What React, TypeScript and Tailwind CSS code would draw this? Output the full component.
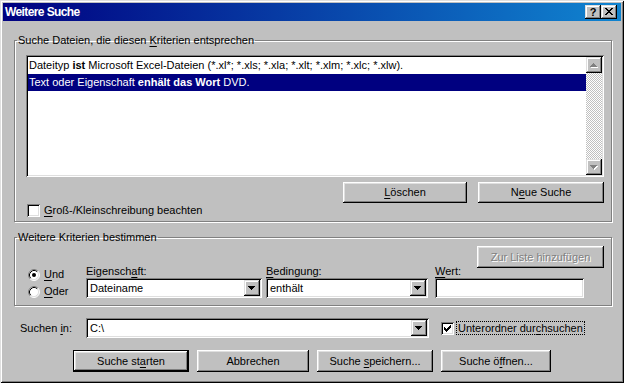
import type { ReactNode } from "react";

const raised =
  "shadow-[inset_-1px_-1px_#000,inset_1px_1px_#fff,inset_-2px_-2px_#808080,inset_2px_2px_#dfdfdf]";
const raisedSmall =
  "shadow-[inset_-1px_-1px_#000,inset_1px_1px_#dfdfdf,inset_-2px_-2px_#808080,inset_2px_2px_#fff]";
const sunken =
  "shadow-[inset_1px_1px_#808080,inset_-1px_-1px_#fff,inset_2px_2px_#000,inset_-2px_-2px_#dfdfdf]";
const etched =
  "border border-[#808080] shadow-[1px_1px_0_#fff,inset_1px_1px_0_#fff]";

function Btn({
  children,
  className = "",
  isDefault = false,
  disabled = false,
}: {
  children: ReactNode;
  className?: string;
  isDefault?: boolean;
  disabled?: boolean;
}) {
  const label = (
    <span
      className={
        disabled
          ? "text-[#808080] [text-shadow:1px_1px_0_#fff]"
          : "text-black"
      }
    >
      {children}
    </span>
  );
  if (isDefault) {
    return (
      <div className={`border border-black ${className}`}>
        <div
          className={`flex h-full w-full items-center justify-center bg-[#c0c0c0] ${raised}`}
        >
          {label}
        </div>
      </div>
    );
  }
  return (
    <div
      className={`flex items-center justify-center bg-[#c0c0c0] ${raised} ${className}`}
    >
      {label}
    </div>
  );
}

function DownArrow() {
  return (
    <svg width="16" height="16" viewBox="0 0 16 16" shapeRendering="crispEdges">
      <rect x="4" y="6" width="7" height="1" fill="#000" />
      <rect x="5" y="7" width="5" height="1" fill="#000" />
      <rect x="6" y="8" width="3" height="1" fill="#000" />
      <rect x="7" y="9" width="1" height="1" fill="#000" />
    </svg>
  );
}

function ScrollArrow({ up }: { up: boolean }) {
  const rows = up
    ? [
        [7, 6, 1],
        [6, 7, 3],
        [5, 8, 5],
        [4, 9, 7],
      ]
    : [
        [4, 6, 7],
        [5, 7, 5],
        [6, 8, 3],
        [7, 9, 1],
      ];
  return (
    <div className={`h-[16px] w-[16px] bg-[#c0c0c0] ${raisedSmall}`}>
      <svg width="16" height="16" viewBox="0 0 16 16" shapeRendering="crispEdges">
        {rows.map(([x, y, w]) => (
          <rect key={`s${y}`} x={x + 1} y={y + 1} width={w} height="1" fill="#fff" />
        ))}
        {rows.map(([x, y, w]) => (
          <rect key={`g${y}`} x={x} y={y} width={w} height="1" fill="#808080" />
        ))}
      </svg>
    </div>
  );
}

function Combo({ value, className = "" }: { value: string; className?: string }) {
  return (
    <div className={`flex h-[20px] bg-white p-[2px] ${sunken} ${className}`}>
      <div className="flex-1 pl-[2px] leading-[16px]">{value}</div>
      <div className={`h-[16px] w-[16px] bg-[#c0c0c0] ${raisedSmall}`}>
        <DownArrow />
      </div>
    </div>
  );
}

function CheckBox({ checked }: { checked: boolean }) {
  return (
    <div className={`h-[13px] w-[13px] shrink-0 bg-white ${sunken}`}>
      {checked && (
        <svg width="13" height="13" viewBox="0 0 13 13" shapeRendering="crispEdges">
          <g fill="#000" transform="translate(3 3)">
            <rect x="6" y="0" width="1" height="1" />
            <rect x="5" y="1" width="2" height="1" />
            <rect x="0" y="2" width="1" height="1" />
            <rect x="4" y="2" width="3" height="1" />
            <rect x="0" y="3" width="2" height="1" />
            <rect x="3" y="3" width="3" height="1" />
            <rect x="0" y="4" width="5" height="1" />
            <rect x="1" y="5" width="3" height="1" />
            <rect x="2" y="6" width="1" height="1" />
          </g>
        </svg>
      )}
    </div>
  );
}

function Radio({ checked }: { checked: boolean }) {
  return (
    <svg width="12" height="12" viewBox="0 0 12 12" className="shrink-0">
      <circle cx="6" cy="6" r="5" fill="#fff" />
      <path d="M2.11 9.89 A5.5 5.5 0 0 1 9.89 2.11" stroke="#808080" fill="none" />
      <path d="M9.89 2.11 A5.5 5.5 0 0 1 2.11 9.89" stroke="#fff" fill="none" />
      <path d="M2.82 9.18 A4.5 4.5 0 0 1 9.18 2.82" stroke="#000" fill="none" />
      <path d="M9.18 2.82 A4.5 4.5 0 0 1 2.82 9.18" stroke="#dfdfdf" fill="none" />
      {checked && <circle cx="6" cy="6" r="2" fill="#000" />}
    </svg>
  );
}

function U({ children }: { children: ReactNode }) {
  return <span className="underline underline-offset-[2px]">{children}</span>;
}

function TitleBar() {
  return (
    <div className="flex h-[18px] items-center bg-[linear-gradient(90deg,#000080,#1084d0)] pl-[2px] pr-[4px]">
      <span className="flex-1 text-[12px] font-bold tracking-[-0.6px] text-white">
        Weitere Suche
      </span>
      <div
        className={`flex h-[14px] w-[16px] items-center justify-center bg-[#c0c0c0] text-[11px] font-bold leading-[14px] ${raisedSmall}`}
      >
        ?
      </div>
      <div className={`h-[14px] w-[16px] bg-[#c0c0c0] ${raisedSmall}`}>
        <svg width="16" height="14" viewBox="0 0 16 14" shapeRendering="crispEdges">
          <g fill="#000" transform="translate(4 3)">
            <rect x="0" y="0" width="2" height="1" />
            <rect x="6" y="0" width="2" height="1" />
            <rect x="1" y="1" width="2" height="1" />
            <rect x="5" y="1" width="2" height="1" />
            <rect x="2" y="2" width="4" height="1" />
            <rect x="3" y="3" width="2" height="1" />
            <rect x="2" y="4" width="4" height="1" />
            <rect x="1" y="5" width="2" height="1" />
            <rect x="5" y="5" width="2" height="1" />
            <rect x="0" y="6" width="2" height="1" />
            <rect x="6" y="6" width="2" height="1" />
          </g>
        </svg>
      </div>
    </div>
  );
}

function CriteriaList() {
  return (
    <div className={`flex h-[122px] bg-white p-[2px] ${sunken}`}>
      <div className="flex-1">
        <div className="h-[17px] pl-[1px] leading-[17px]">
          Dateityp <b>ist</b> Microsoft Excel-Dateien (*.xl*; *.xls; *.xla; *.xlt;
          *.xlm; *.xlc; *.xlw).
        </div>
        <div className="h-[17px] bg-[#000080] pl-[1px] leading-[17px] text-white">
          Text oder Eigenschaft <b>enhält das Wort</b> DVD.
        </div>
      </div>
      <div className="flex w-[16px] flex-col">
        <ScrollArrow up />
        <div className="flex-1 bg-[repeating-conic-gradient(#c0c0c0_0%_25%,#fff_0%_50%)] bg-[length:2px_2px]" />
        <ScrollArrow up={false} />
      </div>
    </div>
  );
}

export default function App() {
  return (
    <div
      className={`h-[383px] w-[624px] bg-[#c0c0c0] p-[3px] font-['Liberation_Sans',Arial,sans-serif] text-[11px] leading-[13px] text-black shadow-[inset_1px_1px_#dfdfdf,inset_-1px_-1px_#000,inset_2px_2px_#fff,inset_-2px_-2px_#808080]`}
    >
      <TitleBar />
      <div className="pl-[11px] pr-[9px]">
        <fieldset className={`mt-[13px] ${etched}`}>
          <legend className="ml-[2px] px-[1px] leading-[13px]">
            Suche Dateien, die diesen <U>K</U>riterien entsprechen
          </legend>
          <div className="pb-[4px] pl-[11px] pr-[7px] pt-[8px]">
            <CriteriaList />
            <div className="mt-[5px] flex justify-end gap-[11px]">
              <Btn className="h-[21px] w-[124px]">
                <U>L</U>öschen
              </Btn>
              <Btn className="h-[21px] w-[126px]">
                N<U>e</U>ue Suche
              </Btn>
            </div>
            <div className="mt-[1px] flex h-[13px] items-center pl-[1px]">
              <CheckBox checked={false} />
              <span className="ml-[4px]">
                <U>G</U>roß-/Kleinschreibung beachten
              </span>
            </div>
          </div>
        </fieldset>

        <fieldset className={`mt-[9px] ${etched}`}>
          <legend className="ml-[2px] px-[1px] leading-[13px]">
            Weitere Kriterien bestimmen
          </legend>
          <div className="pb-[5px] pl-[11px] pr-[7px] pt-[2px]">
            <div className="flex justify-end">
              <Btn className="h-[22px] w-[127px]" disabled>
                Zur Liste hinzufügen
              </Btn>
            </div>
            <div className="-mt-[3px] flex">
              <div className="w-[60px] pl-[2px] pt-[1px]">
                <div className="flex h-[17px] items-center">
                  <Radio checked />
                  <span className="ml-[4px]">
                    <U>U</U>nd
                  </span>
                </div>
                <div className="flex h-[17px] items-center">
                  <Radio checked={false} />
                  <span className="ml-[4px]">
                    <U>O</U>der
                  </span>
                </div>
              </div>
              <div className="w-[176px]">
                <div className="h-[13px]">
                  Eigensch<U>a</U>ft:
                </div>
                <Combo value="Dateiname" />
              </div>
              <div className="ml-[4px] w-[162px]">
                <div className="h-[13px]">
                  <U>B</U>edingung:
                </div>
                <Combo value="enthält" />
              </div>
              <div className="ml-[7px] w-[149px]">
                <div className="h-[13px]">
                  <U>W</U>ert:
                </div>
                <div className={`h-[20px] bg-white ${sunken}`} />
              </div>
            </div>
          </div>
        </fieldset>

        <div className="mt-[12px] flex h-[20px] items-center pl-[6px]">
          <span className="w-[66px]">
            Suchen <U>i</U>n:
          </span>
          <Combo value="C:\" className="w-[343px]" />
          <div className="ml-[12px] flex items-center">
            <CheckBox checked />
            <span className="ml-[2px] border border-dotted border-black px-[1px] leading-[12px]">
              Unterordner dur<U>c</U>hsuchen
            </span>
          </div>
        </div>

        <div className="mt-[12px] flex gap-[8px] pl-[59px]">
          <Btn className="h-[22px] w-[116px]" isDefault>
            Suche st<U>a</U>rten
          </Btn>
          <Btn className="h-[22px] w-[112px]">Abbrechen</Btn>
          <Btn className="h-[22px] w-[116px]">
            Suche <U>s</U>peichern...
          </Btn>
          <Btn className="h-[22px] w-[110px]">
            Suche ö<U>f</U>fnen...
          </Btn>
        </div>
      </div>
    </div>
  );
}
